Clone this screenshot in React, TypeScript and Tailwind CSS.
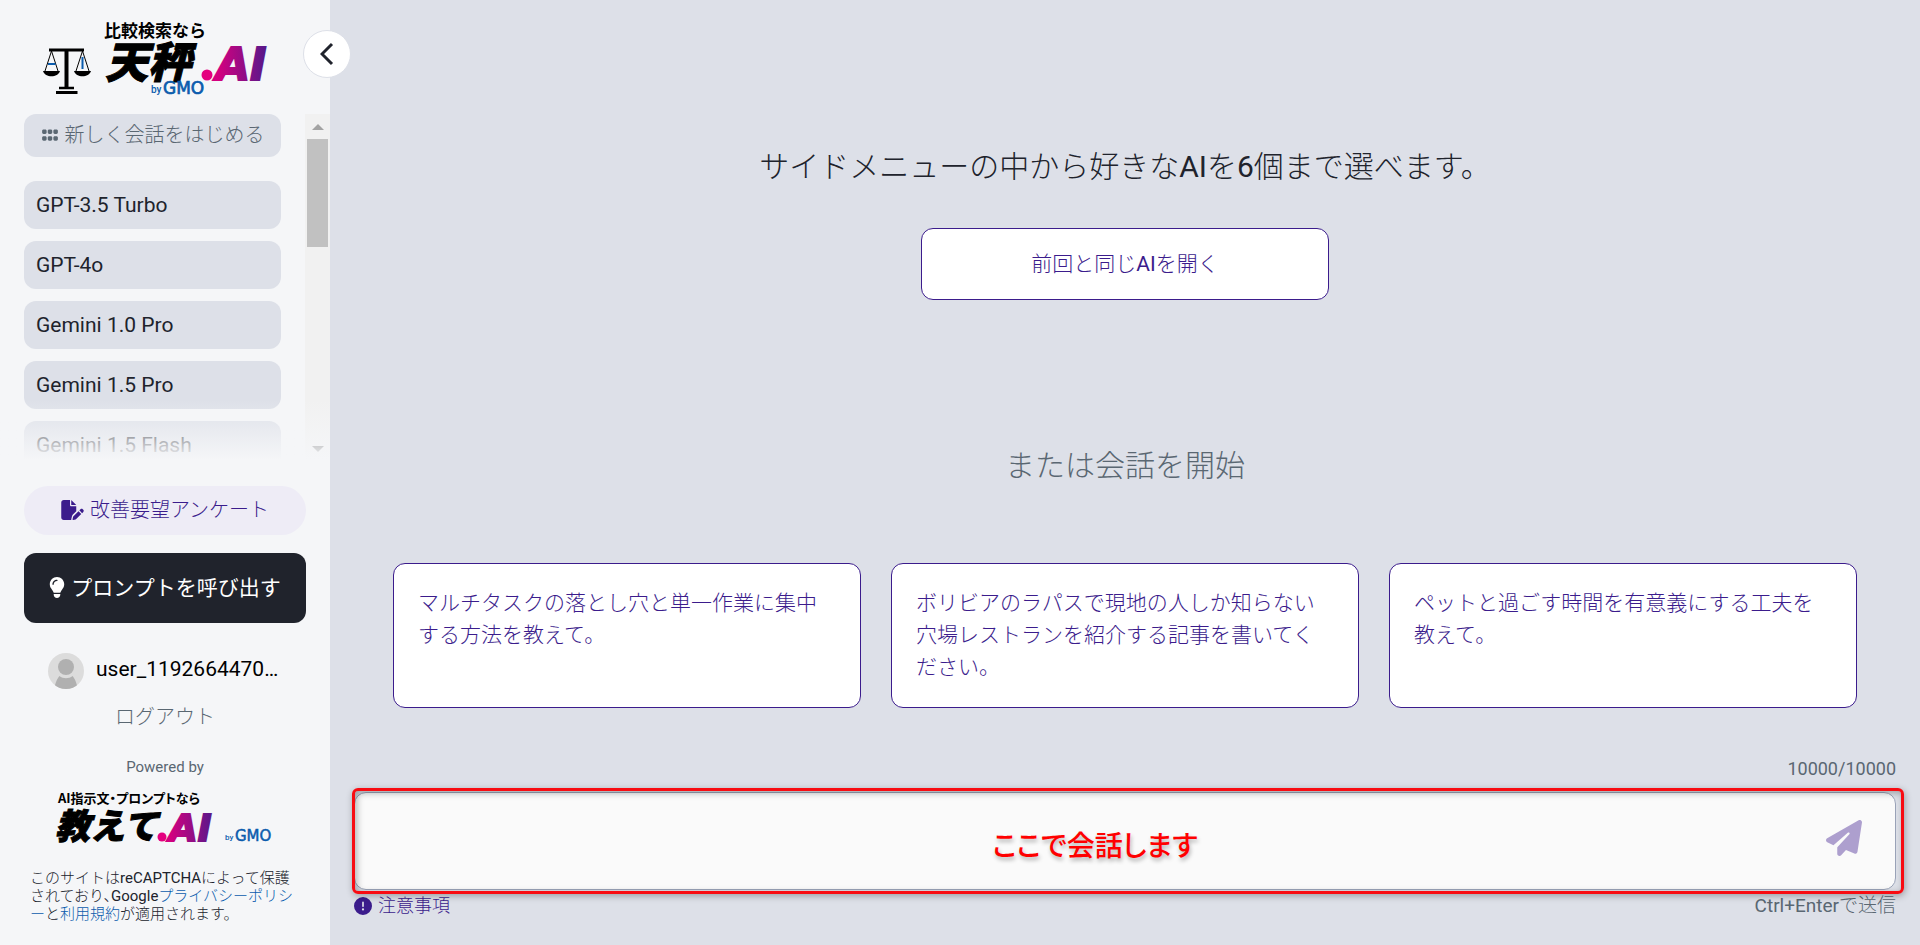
import clsx from "clsx";
import type { ReactNode } from "react";
import {
	FaCircleExclamation,
	FaFilePen,
	FaGrip,
	FaLightbulb,
	FaPaperPlane,
} from "react-icons/fa6";

const models = [
	"GPT-3.5 Turbo",
	"GPT-4o",
	"Gemini 1.0 Pro",
	"Gemini 1.5 Pro",
	"Gemini 1.5 Flash",
];

const suggestions = [
	"マルチタスクの落とし穴と単一作業に集中する方法を教えて。",
	"ボリビアのラパスで現地の人しか知らない穴場レストランを紹介する記事を書いてください。",
	"ペットと過ごす時間を有意義にする工夫を教えて。",
];

const TenbinLogo = () => (
	<svg
		width="248"
		height="104"
		viewBox="0 0 248 104"
		role="img"
		aria-label="天秤.AI byGMO"
	>
		<defs>
			<linearGradient
				id="tenbin-ai"
				gradientUnits="userSpaceOnUse"
				x1="178"
				x2="236"
				y1="0"
				y2="0"
			>
				<stop offset="0" stopColor="#d4007f" />
				<stop offset="0.5" stopColor="#8a0f86" />
				<stop offset="1" stopColor="#3b1c8c" />
			</linearGradient>
		</defs>
		<g stroke="#000" fill="none">
			<path d="M9 50H44" strokeWidth="3" />
			<path d="M26.500 49V89" strokeWidth="4" />
			<path d="M19 88H34" strokeWidth="2.500" />
			<path d="M16 92.500H37.500" strokeWidth="3" />
			<path d="M11.500 51L5 71M11.500 51L18 71M42.500 51L36 71M42.500 51L49 71" />
		</g>
		<path d="M3 71H20C18 78 5 78 3 71ZM34 71H51C49 78 36 78 34 71Z" />
		<path d="M8 64H15.500M42.500 57V69" stroke="#0b5cad" strokeWidth="2" />
		<text
			x="64"
			y="37"
			className="font-['Noto_Sans_CJK_JP',sans-serif] text-[17px] font-bold"
		>
			比較検索なら
		</text>
		<text
			x="65"
			y="78"
			stroke="#000"
			className="font-['Noto_Sans_CJK_JP',sans-serif] text-[43px] font-black italic"
		>
			天秤
		</text>
		<circle cx="167" cy="75" r="5.500" fill="#e4007f" />
		<text
			x="176"
			y="80"
			fill="url(#tenbin-ai)"
			stroke="url(#tenbin-ai)"
			strokeWidth="2"
			className="font-['DejaVu_Sans',sans-serif] text-[44px] font-bold italic"
		>
			AI
		</text>
		<text
			x="111"
			y="93"
			fill="#0b5cad"
			className="font-[Roboto,sans-serif] text-[10px] font-medium"
		>
			by
		</text>
		<text
			x="123"
			y="94"
			fill="#0b5cad"
			stroke="#0b5cad"
			strokeWidth="0.700"
			className="font-['DejaVu_Sans',sans-serif] text-[17px]"
		>
			GMO
		</text>
	</svg>
);

const OshieteLogo = () => (
	<svg
		width="228"
		height="60"
		viewBox="0 0 228 60"
		role="img"
		aria-label="教えて.AI byGMO"
	>
		<defs>
			<linearGradient
				id="oshiete-ai"
				gradientUnits="userSpaceOnUse"
				x1="116"
				x2="168"
				y1="0"
				y2="0"
			>
				<stop offset="0" stopColor="#d4007f" />
				<stop offset="0.5" stopColor="#8a0f86" />
				<stop offset="1" stopColor="#3b1c8c" />
			</linearGradient>
		</defs>
		<text
			x="4"
			y="16"
			className="font-['Noto_Sans_CJK_JP',sans-serif] text-[13px] font-bold [font-feature-settings:'palt']"
		>
			AI指示文・プロンプトなら
		</text>
		<text
			x="1"
			y="52"
			stroke="#000"
			className="font-['Noto_Sans_CJK_JP',sans-serif] text-[35px] font-black italic"
		>
			教えて
		</text>
		<circle cx="108" cy="50" r="4.500" fill="#e4007f" />
		<text
			x="115"
			y="54"
			fill="url(#oshiete-ai)"
			stroke="url(#oshiete-ai)"
			strokeWidth="2"
			className="font-['DejaVu_Sans',sans-serif] text-[37px] font-bold italic"
		>
			AI
		</text>
		<text
			x="171"
			y="53"
			fill="#0b5cad"
			className="font-[Roboto,sans-serif] text-[8px] font-medium"
		>
			by
		</text>
		<text
			x="181"
			y="54"
			fill="#0b5cad"
			stroke="#0b5cad"
			strokeWidth="0.500"
			className="font-['DejaVu_Sans',sans-serif] text-[15px]"
		>
			GMO
		</text>
	</svg>
);

const Avatar = () => (
	<svg width="36" height="36" viewBox="0 0 36 36" aria-hidden="true">
		<clipPath id="avatar">
			<circle cx="18" cy="18" r="18" />
		</clipPath>
		<g clipPath="url(#avatar)">
			<rect width="36" height="36" fill="#dcdcdc" />
			<circle cx="18" cy="14" r="8" fill="#b0b0b0" />
			<path
				d="M6 38C7 30 9 26 11.500 23C15 26 21 26 24.500 23C27 26 29 30 30 38Z"
				fill="#b0b0b0"
			/>
		</g>
	</svg>
);

const Scrollbar = () => (
	<div
		className="flex w-[25px] shrink-0 flex-col items-center bg-[#f1f1f1]"
		aria-hidden="true"
	>
		<svg width="12" height="25" viewBox="0 0 12 25">
			<path d="M0 16L6 10L12 16Z" fill="#a3a3a3" />
		</svg>
		<div className="h-[108px] w-[21px] bg-[#c1c1c1]" />
		<svg className="mt-auto" width="12" height="25" viewBox="0 0 12 25">
			<path d="M0 11L6 17L12 11Z" fill="#505050" />
		</svg>
	</div>
);

type CardButtonProps = {
	className?: string;
	children: ReactNode;
};

const CardButton = ({ className, children }: CardButtonProps) => (
	<button
		type="button"
		className={clsx(
			"rounded-xl border border-[#3b1c8c] bg-white text-[21px] leading-[32px] text-[#3b1c8c]",
			className,
		)}
	>
		{children}
	</button>
);

const Sidebar = () => (
	<aside className="relative flex h-screen w-[330px] shrink-0 flex-col bg-[#f5f6f8]">
		<div className="h-[114px] shrink-0 pl-10">
			<TenbinLogo />
		</div>
		<button
			type="button"
			aria-label="メニューを閉じる"
			className="absolute top-[30px] -right-[21px] flex size-12 items-center justify-center rounded-full border border-[#dde0e8] bg-white"
		>
			<svg width="14" height="24" viewBox="0 0 14 24">
				<path
					d="M12 2L2 12L12 22"
					fill="none"
					stroke="#20232c"
					strokeWidth="3"
				/>
			</svg>
		</button>

		<div className="relative flex min-h-0 flex-1 overflow-hidden">
			<div className="flex-1 px-6">
				<button
					type="button"
					className="mb-6 flex h-[43px] w-full items-center justify-center gap-1.5 rounded-xl bg-[#dde0e8] pb-0.5 text-xl text-[#5a6772]"
				>
					<FaGrip className="size-[18px]" />
					新しく会話をはじめる
				</button>
				<ul className="flex flex-col gap-3">
					{models.map((model) => (
						<li key={model}>
							<button
								type="button"
								className="h-12 w-full rounded-xl bg-[#dde0e8] px-3 pt-0.5 text-left text-[21px] text-[#20232c]"
							>
								{model}
							</button>
						</li>
					))}
				</ul>
			</div>
			<Scrollbar />
			<div className="pointer-events-none absolute inset-x-0 bottom-0 h-[60px] bg-linear-to-b from-[#f5f6f8]/0 to-[#f5f6f8]" />
		</div>

		<div className="flex shrink-0 flex-col px-6 pt-[26px] pb-[22px]">
			<button
				type="button"
				className="flex h-[49px] items-center justify-center gap-1.5 rounded-full bg-[#eeecf6] pb-0.5 text-xl text-[#3b1c8c]"
			>
				<FaFilePen className="h-5 w-[23px]" />
				改善要望アンケート
			</button>
			<button
				type="button"
				className="mt-[18px] flex h-[70px] items-center justify-center gap-1.5 rounded-xl bg-[#20232c] pb-0.5 font-['Noto_Sans_CJK_JP',sans-serif] text-[21px] text-white"
			>
				<FaLightbulb className="h-[21px] w-4" />
				プロンプトを呼び出す
			</button>
			<div className="mt-[30px] flex items-center gap-3 px-6">
				<Avatar />
				<span className="pb-1 text-[21px] leading-7 text-black">
					user_1192664470…
				</span>
			</div>
			<a href="#logout" className="mt-3.5 text-center text-xl text-[#5a6772]">
				ログアウト
			</a>
			<p className="mt-6 text-center text-[15px] leading-6 text-[#5a6772]">
				Powered by
			</p>
			<div className="mt-2 pl-[30px]">
				<OshieteLogo />
			</div>
			<p className="mt-[22px] px-1.5 text-[15px] leading-[18px] break-all text-[#20232c] [font-feature-settings:'halt']">
				このサイトはreCAPTCHAによって保護されており、Google
				<a href="#privacy" className="text-[#0b5cad]">
					プライバシーポリシー
				</a>
				と
				<a href="#terms" className="text-[#0b5cad]">
					利用規約
				</a>
				が適用されます。
			</p>
		</div>
	</aside>
);

const MessageForm = () => (
	<form className="mt-auto flex flex-col">
		<p className="text-right text-lg leading-[27px] text-[#5a6772]">
			10000/10000
		</p>
		<div className="relative mt-2.5 flex h-[98px]">
			<textarea
				aria-label="メッセージ"
				className="flex-1 resize-none rounded-xl border border-[#9aa3b8] bg-[#fafafa] p-6 pr-24 text-xl outline-none"
			/>
			<button
				type="submit"
				aria-label="送信"
				className="absolute top-7 right-[34px] text-[#ad9fce]"
			>
				<FaPaperPlane className="size-9" />
			</button>
			{/* highlight frame and note over the input */}
			<div className="pointer-events-none absolute -inset-x-0.5 -inset-y-1 -right-2 rounded-md border-3 border-[#f80c12] shadow-[1px_2px_7px_rgba(0,0,0,0.3),inset_2px_2px_7px_rgba(0,0,0,0.3)]" />
			<p className="pointer-events-none absolute inset-y-0 right-[60px] left-0 flex items-center justify-center pt-1.5 font-['Noto_Sans_CJK_JP_Medium','Noto_Sans_CJK_JP',sans-serif] text-[28px] text-[#ff0000] [font-feature-settings:'palt'] text-shadow-[1px_3px_4px_rgba(0,0,0,0.3)]">
				ここで会話します
			</p>
		</div>
		<div className="mt-0.5 flex items-center justify-between leading-7 text-[#5a6772]">
			<a
				href="#notes"
				className="flex items-center gap-1.5 text-lg leading-7 text-[#3b1c8c]"
			>
				<FaCircleExclamation className="size-[18px]" />
				注意事項
			</a>
			<span className="text-[19px]">Ctrl+Enterで送信</span>
		</div>
	</form>
);

const App = () => (
	<div className="flex min-h-screen bg-[#dde0e8] font-[Roboto,'Noto_Sans_CJK_JP_Light','Noto_Sans_CJK_JP',sans-serif] text-[#20232c]">
		<Sidebar />
		<main className="flex min-w-0 flex-1 flex-col px-6 pt-36 pb-[25px]">
			<h1 className="text-center text-[30px] leading-[45px]">
				サイドメニューの中から好きなAIを6個まで選べます。
			</h1>
			<CardButton className="mt-[39px] h-[72px] w-[408px] self-center">
				前回と同じAIを開く
			</CardButton>
			<h2 className="mt-[143px] text-center text-[30px] leading-[45px] text-[#5a6772]">
				または会話を開始
			</h2>
			<div className="mt-[75px] grid grid-cols-3 gap-[30px] px-[39px]">
				{suggestions.map((text) => (
					<CardButton
						key={text}
						className="flex min-h-[145px] items-start px-6 py-[23px] text-left"
					>
						{text}
					</CardButton>
				))}
			</div>
			<MessageForm />
		</main>
	</div>
);

export default App;
